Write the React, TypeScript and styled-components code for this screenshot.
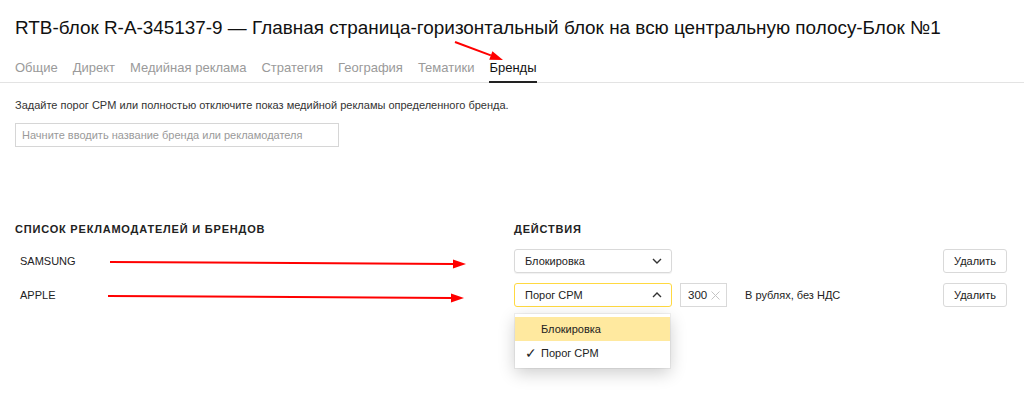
import { FunctionComponent } from 'react'
import styled, { createGlobalStyle } from 'styled-components'

const GlobalStyle = createGlobalStyle`
  html, body {
    margin: 0;
    padding: 0;
    background: #fff;
    font-family: "Liberation Sans", Arial, sans-serif;
    color: #000;
  }
`

const tabs = ['Общие', 'Директ', 'Медийная реклама', 'Стратегия', 'География', 'Тематики', 'Бренды']

const Page = styled.div`
  position: relative;
  width: 1024px;
  height: 393px;
  overflow: hidden;
`

const Title = styled.h1`
  margin: 0;
  padding: 17px 15px 0;
  font-size: 18.9px;
  line-height: 22px;
  font-weight: normal;
  color: #111;
`

const TabBar = styled.nav`
  display: flex;
  gap: 15px;
  margin-top: 20px;
  padding: 0 15px;
  border-bottom: 1px solid #e3e3e3;
`

const Tab = styled.span<{ $active?: boolean }>`
  font-size: 13px;
  line-height: 16px;
  padding-top: 1px;
  padding-bottom: 5px;
  color: ${p => (p.$active ? '#111' : '#9a9a9a')};
  border-bottom: 2px solid ${p => (p.$active ? '#222' : 'transparent')};
  margin-bottom: -1px;
`

const Content = styled.section`
  padding: 15px 15px 0;
`

const Hint = styled.p`
  margin: 0;
  font-size: 11px;
  line-height: 14px;
  color: #333;
`

const Search = styled.div`
  box-sizing: border-box;
  width: 324px;
  height: 24px;
  margin-top: 11px;
  padding: 0 6px;
  border: 1px solid #d6d6d6;
  font-size: 11px;
  line-height: 22px;
  color: #9a9a9a;
`

const Table = styled.div`
  display: grid;
  grid-template-columns: 499px 1fr;
  margin-top: 75px;
  padding-right: 2px;
`

const Heading = styled.div`
  font-size: 11px;
  line-height: 14px;
  font-weight: bold;
  letter-spacing: 0.8px;
  color: #222;
  padding-bottom: 8px;
`

const Brand = styled.div`
  display: flex;
  align-items: center;
  height: 34px;
  padding-left: 5px;
  font-size: 11px;
  color: #222;
`

const Actions = styled.div`
  position: relative;
  display: flex;
  align-items: center;
  height: 34px;
`

const Select = styled.div<{ $open?: boolean }>`
  box-sizing: border-box;
  display: flex;
  align-items: center;
  justify-content: space-between;
  width: 158px;
  height: 24px;
  padding: 0 9px 0 10px;
  border: 1px solid ${p => (p.$open ? '#ffd941' : '#d9d9d9')};
  border-radius: 3px;
  box-shadow: ${p => (p.$open ? 'none' : '0 1px 1px rgba(0,0,0,0.06)')};
  font-size: 11px;
  color: #222;
`

const PriceInput = styled.div`
  box-sizing: border-box;
  display: flex;
  align-items: center;
  justify-content: space-between;
  width: 47px;
  height: 24px;
  margin-left: 8px;
  padding: 0 6px 0 7px;
  border: 1px solid #d9d9d9;
  font-size: 11.5px;
  color: #222;
`

const Note = styled.span`
  margin-left: 18px;
  font-size: 11px;
  color: #222;
`

const DeleteButton = styled.button`
  box-sizing: border-box;
  margin-left: auto;
  width: 64px;
  height: 24px;
  padding: 0;
  background: #fff;
  border: 1px solid #d9d9d9;
  border-radius: 3px;
  font-family: inherit;
  font-size: 11px;
  color: #222;
`

const Menu = styled.ul`
  position: absolute;
  top: 36px;
  left: 1px;
  width: 155px;
  margin: 0;
  padding: 3px 0;
  list-style: none;
  background: #fff;
  box-shadow: 0 5px 16px rgba(0, 0, 0, 0.2), 0 0 0 1px rgba(0, 0, 0, 0.05);
  z-index: 2;
`

const MenuItem = styled.li<{ $hover?: boolean }>`
  display: flex;
  align-items: center;
  height: 24px;
  padding-left: 26px;
  position: relative;
  font-size: 11px;
  color: #222;
  background: ${p => (p.$hover ? '#ffe99f' : 'transparent')};
`

const Check = styled.span`
  position: absolute;
  left: 10px;
  top: 4px;
  font-size: 14px;
`

const Overlay = styled.svg`
  position: absolute;
  top: 0;
  left: 0;
  pointer-events: none;
`

const Chevron: FunctionComponent<{ up?: boolean }> = ({ up }) => (
  <svg width="10" height="6" viewBox="0 0 10 6">
    <polyline
      points={up ? '1,5 5,1 9,5' : '1,1 5,5 9,1'}
      fill="none"
      stroke="#333"
      strokeWidth="1.4"
    />
  </svg>
)

const ClearIcon = () => (
  <svg width="9" height="9" viewBox="0 0 9 9">
    <path d="M0.5 0.5 L8.5 8.5 M8.5 0.5 L0.5 8.5" stroke="#c4c4c4" strokeWidth="1" />
  </svg>
)

const Arrow: FunctionComponent<{ x1: number; y1: number; x2: number; y2: number }> = ({ x1, y1, x2, y2 }) => {
  const a = Math.atan2(y2 - y1, x2 - x1)
  const len = 13
  const w = 4.5
  const bx = x2 - Math.cos(a) * len
  const by = y2 - Math.sin(a) * len
  const px = -Math.sin(a) * w
  const py = Math.cos(a) * w
  return (
    <g>
      <line x1={x1} y1={y1} x2={bx} y2={by} stroke="#f00" strokeWidth="2" />
      <polygon points={`${x2},${y2} ${bx + px},${by + py} ${bx - px},${by - py}`} fill="#f00" />
    </g>
  )
}

export default function App() {
  return (
    <Page>
      <GlobalStyle />
      <Title>RTB-блок R-A-345137-9 — Главная страница-горизонтальный блок на всю центральную полосу-Блок №1</Title>
      <TabBar>
        {tabs.map(t => (
          <Tab key={t} $active={t === 'Бренды'}>{t}</Tab>
        ))}
      </TabBar>
      <Content>
        <Hint>Задайте порог CPM или полностью отключите показ медийной рекламы определенного бренда.</Hint>
        <Search>Начните вводить название бренда или рекламодателя</Search>
        <Table>
          <Heading>СПИСОК РЕКЛАМОДАТЕЛЕЙ И БРЕНДОВ</Heading>
          <Heading>ДЕЙСТВИЯ</Heading>

          <Brand>SAMSUNG</Brand>
          <Actions>
            <Select>
              Блокировка
              <Chevron />
            </Select>
            <DeleteButton>Удалить</DeleteButton>
          </Actions>

          <Brand>APPLE</Brand>
          <Actions>
            <Select $open>
              Порог CPM
              <Chevron up />
            </Select>
            <PriceInput>
              300
              <ClearIcon />
            </PriceInput>
            <Note>В рублях, без НДС</Note>
            <DeleteButton>Удалить</DeleteButton>
            <Menu>
              <MenuItem $hover>Блокировка</MenuItem>
              <MenuItem>
                <Check>✓</Check>
                Порог CPM
              </MenuItem>
            </Menu>
          </Actions>
        </Table>
      </Content>
      <Overlay width="1024" height="393">
        <Arrow x1={455} y1={42} x2={503} y2={60} />
        <Arrow x1={110} y1={262} x2={466} y2={264} />
        <Arrow x1={108} y1={296} x2={464} y2={298} />
      </Overlay>
    </Page>
  )
}
